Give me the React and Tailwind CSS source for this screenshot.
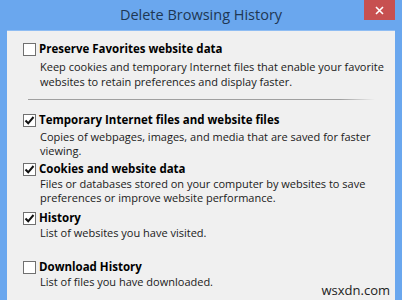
import React from "react";

const font = { fontFamily: '"Open Sans", "Noto Sans", sans-serif' };

const Checkbox = ({ checked }) => (
  <div className="w-[13px] h-[13px] border border-[#707070] bg-white flex items-center justify-center shrink-0">
    {checked && (
      <svg width="11" height="11" viewBox="0 0 11 11">
        <path d="M1.5 5.5 L4.2 8.3 L9.5 2" fill="none" stroke="#111" strokeWidth="2" />
      </svg>
    )}
  </div>
);

const Option = ({ checked, title, lines, className = "", descClass = "" }) => (
  <div className={"flex flex-col " + className}>
    <div className="flex items-center gap-[3px] h-[16px]">
      <Checkbox checked={checked} />
      <span className="text-[11.5px] font-bold text-black leading-[16px] whitespace-nowrap">{title}</span>
    </div>
    <div className={"pl-[17px] text-[11px] text-[#1a1a1a] whitespace-nowrap " + descClass}>
      {lines.map((l) => (
        <div key={l}>{l}</div>
      ))}
    </div>
  </div>
);

export default function App() {
  return (
    <div className="w-[402px] h-[300px] bg-[#6aa7ee] overflow-hidden flex flex-col" style={font}>
      {/* Title bar */}
      <div className="relative h-[30px] flex items-center justify-center shrink-0">
        <span className="text-[14.5px] text-[#1e3754] -mt-[1px]">Delete Browsing History</span>
        <div className="absolute right-[7px] top-0 w-[31px] h-[20px] bg-[#c75050] flex items-center justify-center">
          <svg width="9" height="9" viewBox="0 0 9 9">
            <path d="M1 1 L8 8 M8 1 L1 8" stroke="white" strokeWidth="1.6" />
          </svg>
        </div>
      </div>

      {/* Content panel */}
      <div className="flex-1 mx-[7px] bg-[#f0f0f0] border-t border-[#8fbdf3] pl-[16px] pt-[10px] flex flex-col">
        <Option
          checked={false}
          title="Preserve Favorites website data"
          descClass="mt-[2px] leading-[15px]"
          lines={[
            "Keep cookies and temporary Internet files that enable your favorite",
            "websites to retain preferences and display faster.",
          ]}
        />
        <div className="mt-[10px] ml-[5px] mr-[20px] h-px bg-gradient-to-r from-[#a0a0a0] from-90% to-transparent" />
        <Option
          className="mt-[12px]"
          checked
          title="Temporary Internet files and website files"
          descClass="mt-[2px] leading-[14px]"
          lines={[
            "Copies of webpages, images, and media that are saved for faster",
            "viewing.",
          ]}
        />
        <Option
          className="mt-[3px]"
          checked
          title="Cookies and website data"
          descClass="leading-[14px]"
          lines={[
            "Files or databases stored on your computer by websites to save",
            "preferences or improve website performance.",
          ]}
        />
        <Option
          className="mt-[5px]"
          checked
          title="History"
          descClass="leading-[14px]"
          lines={["List of websites you have visited."]}
        />
        <Option
          className="mt-[19px]"
          checked={false}
          title="Download History"
          descClass="leading-[14px]"
          lines={["List of files you have downloaded."]}
        />
        <div className="flex justify-end pr-[5px] -mt-[6px]">
          <span className="text-[13px] leading-[15px] text-[#222]">wsxdn.com</span>
        </div>
      </div>
    </div>
  );
}
